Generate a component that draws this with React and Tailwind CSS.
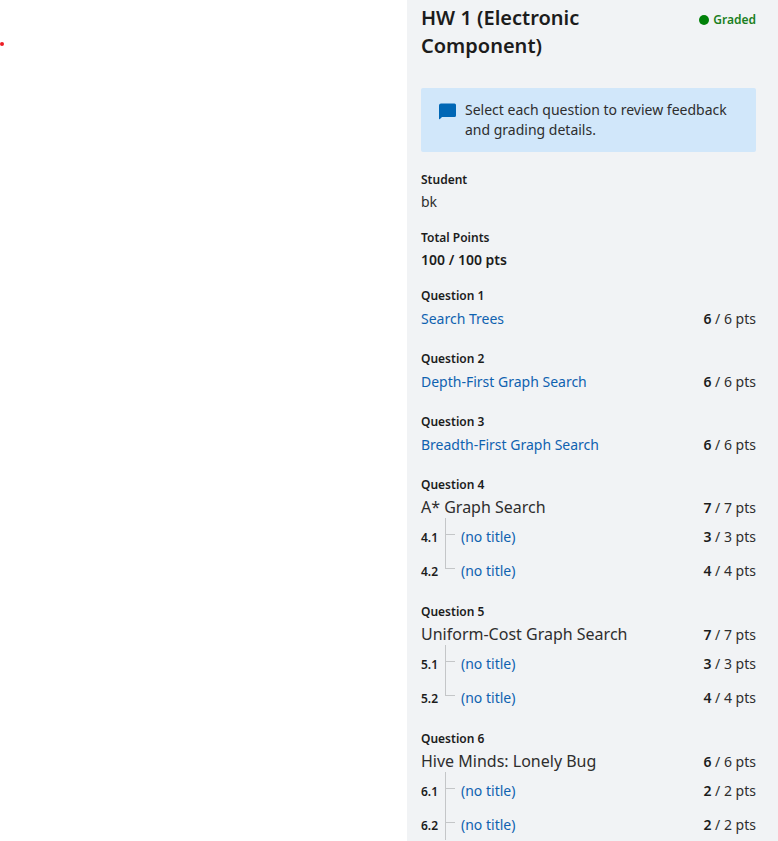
const QUESTIONS = [
  { n: 1, title: "Search Trees", pts: 6 },
  { n: 2, title: "Depth-First Graph Search", pts: 6 },
  { n: 3, title: "Breadth-First Graph Search", pts: 6 },
  { n: 4, title: "A* Graph Search", pts: 7, parts: [3, 4] },
  { n: 5, title: "Uniform-Cost Graph Search", pts: 7, parts: [3, 4] },
  { n: 6, title: "Hive Minds: Lonely Bug", pts: 6, parts: [2, 2], continues: true },
];

function Points({ value }) {
  return (
    <span className="shrink-0 text-sm leading-5">
      <b className="font-semibold text-[#1c1c1c]">{value}</b> / {value} pts
    </span>
  );
}

function Part({ label, value, last }) {
  return (
    <li className={last ? "flex h-[30px] items-stretch" : "flex h-[34px] items-stretch"}>
      <span className="w-6 shrink-0 pt-[10px] text-xs leading-5 font-semibold text-[#1c1c1c]">{label}</span>
      <span className="flex w-4 shrink-0 flex-col">
        <span className="h-[17px] w-[10px] border-b border-l border-[#c4c6c8]" />
        <span className={last ? "flex-1" : "flex-1 border-l border-[#c4c6c8]"} />
      </span>
      <span className="flex flex-1 justify-between pt-[9px]">
        <a href="#part" className="text-sm leading-5 text-[#0f62b0]">(no title)</a>
        <Points value={value} />
      </span>
    </li>
  );
}

function Question({ q }) {
  return (
    <section>
      <h2 className="text-xs leading-5 font-semibold text-[#1c1c1c]">Question {q.n}</h2>
      {q.parts ? (
        <div className="mt-[2px] flex items-baseline justify-between">
          <h3 className="text-base leading-5">{q.title}</h3>
          <Points value={q.pts} />
        </div>
      ) : (
        <div className="mt-[3px] flex items-baseline justify-between">
          <a href="#question" className="text-sm leading-5 text-[#0f62b0]">{q.title}</a>
          <Points value={q.pts} />
        </div>
      )}
      {q.parts && (
        <ul>
          {q.parts.map((value, i) => (
            <Part
              key={i}
              label={`${q.n}.${i + 1}`}
              value={value}
              last={!q.continues && i === q.parts.length - 1}
            />
          ))}
        </ul>
      )}
    </section>
  );
}

export default function App() {
  return (
    <div className="flex min-h-screen bg-white font-['Noto_Sans',sans-serif] text-[#2e2e2e]">
      <main className="flex-1 pt-[42px]">
        <div className="size-1 rounded-full bg-[#ed1c24]" />
      </main>
      <aside className="w-[371px] shrink-0 bg-[#f1f3f5] pt-1 pr-[22px] pl-[14px]">
        <header className="flex items-start justify-between">
          <h1 className="w-[200px] text-xl leading-7 font-semibold text-[#1c1c1c]">HW 1 (Electronic Component)</h1>
          <span className="flex items-center gap-1 pt-[6px] text-xs leading-5 font-semibold text-[#1b7f22]">
            <span className="size-[10px] rounded-full bg-[#008109]" />
            Graded
          </span>
        </header>
        <div className="mt-7 flex gap-2 rounded-xs bg-[#d1e7fa] px-[17px] py-3">
          <svg className="mt-[3px] h-[18px] w-[19px] shrink-0" viewBox="0 0 19 18" fill="#0067b5" aria-hidden="true">
            <path d="M3 .5h13.500q1.500 0 1.500 1.500v10.500q0 1.500-1.500 1.500H4L1.700 16.200q-.7.200-.7-.7V2.500Q1 .5 3 .5z" />
          </svg>
          <p className="text-sm leading-5">Select each question to review feedback and grading details.</p>
        </div>
        <dl className="mt-[18px]">
          <dt className="text-xs leading-5 font-semibold text-[#1c1c1c]">Student</dt>
          <dd className="mt-[2px] text-sm leading-5">bk</dd>
          <dt className="mt-4 text-xs leading-5 font-semibold text-[#1c1c1c]">Total Points</dt>
          <dd className="mt-[2px] text-sm leading-5 font-semibold text-[#1c1c1c]">100 / 100 pts</dd>
        </dl>
        <div className="mt-4 flex flex-col gap-5">
          {QUESTIONS.map((q) => (
            <Question key={q.n} q={q} />
          ))}
        </div>
      </aside>
    </div>
  );
}
